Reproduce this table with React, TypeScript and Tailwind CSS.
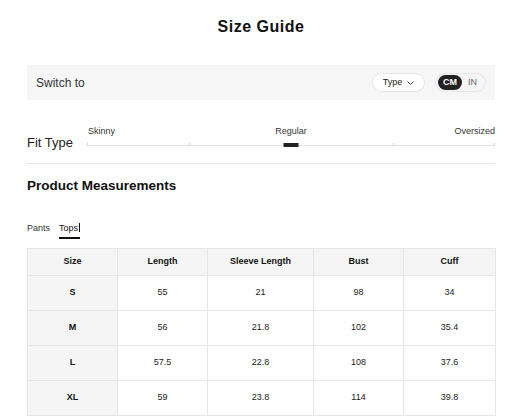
const rows = [
  { size: 'S', length: '55', sleeve: '21', bust: '98', cuff: '34' },
  { size: 'M', length: '56', sleeve: '21.8', bust: '102', cuff: '35.4' },
  { size: 'L', length: '57.5', sleeve: '22.8', bust: '108', cuff: '37.6' },
  { size: 'XL', length: '59', sleeve: '23.8', bust: '114', cuff: '39.8' },
];

export default function App() {
  return (
    <div className="w-[515px] h-[419px] overflow-hidden bg-white text-[#222] font-['Liberation_Sans',Arial,sans-serif]">
      <div className="ml-[27px] w-[468px]">
        {/* Title */}
        <h1 className="pt-[18px] text-center text-[16px] leading-[18px] font-bold tracking-[0.5px] text-[#111]">
          Size Guide
        </h1>

        {/* Switch bar */}
        <div className="mt-[29px] h-[35px] bg-[#f6f6f6] flex items-center justify-between pl-[9px] pr-[9px]">
          <span className="text-[12px] text-[#333]">Switch to</span>
          <div className="flex items-center gap-[10px]">
            <div className="w-[53px] h-[19px] rounded-full bg-white border border-[#e6e6e6] flex items-center justify-center gap-[5px]">
              <span className="text-[9px] leading-none text-[#222]">Type</span>
              <svg width="7" height="4" viewBox="0 0 7 4" fill="none">
                <polyline points="0.5,0.5 3.5,3.5 6.5,0.5" stroke="#444" strokeWidth="1" />
              </svg>
            </div>
            <div className="w-[51px] h-[19px] rounded-full border border-[#e6e6e6] flex items-center pl-[2px]">
              <span className="w-[24px] h-[15px] rounded-full bg-[#222] text-white text-[9px] font-bold flex items-center justify-center">
                CM
              </span>
              <span className="ml-[6px] text-[9px] text-[#666]">IN</span>
            </div>
          </div>
        </div>

        {/* Fit type */}
        <div className="mt-[26px] flex items-start h-[21px]">
          <div className="w-[60px] mt-[9px] text-[13px] leading-[15px] font-medium text-[#222]">Fit Type</div>
          <div className="flex-1">
            <div className="relative h-[10px] text-[9px] leading-[10px] text-[#333]">
              <span className="absolute left-[1px] top-0">Skinny</span>
              <span className="absolute left-1/2 -translate-x-1/2 top-0">Regular</span>
              <span className="absolute right-0 top-0">Oversized</span>
            </div>
            <div className="relative mt-[7px] h-[4px]">
              <div className="absolute left-0 right-0 top-[2px] h-px bg-[#e2e2e2]" />
              <div className="absolute left-0 top-0 w-px h-[3px] bg-[#d8d8d8]" />
              <div className="absolute left-1/4 top-0 w-px h-[3px] bg-[#d8d8d8]" />
              <div className="absolute left-3/4 top-0 w-px h-[3px] bg-[#d8d8d8]" />
              <div className="absolute right-0 top-0 w-px h-[3px] bg-[#d8d8d8]" />
              <div className="absolute left-1/2 -translate-x-1/2 top-0 w-[15px] h-[4px] bg-[#222]" />
            </div>
          </div>
        </div>

        <div className="mt-[16px] border-t border-[#e6e6e6]" />

        {/* Product measurements */}
        <h2 className="mt-[14px] text-[13.5px] leading-[16px] font-bold text-[#111]">Product Measurements</h2>

        <div className="mt-[29px] flex items-start gap-[9px] text-[9px] leading-[10px]">
          <span className="text-[#333]">Pants</span>
          <span className="pb-[4px] border-b-2 border-[#111] text-[#111] flex items-start">
            Tops
            <span className="inline-block w-px h-[9px] bg-[#111] ml-px" />
          </span>
        </div>

        <table className="mt-[9px] w-[468px] table-fixed border-collapse text-[9px] text-center">
          <colgroup>
            <col className="w-[90px]" />
            <col className="w-[90px]" />
            <col className="w-[106px]" />
            <col className="w-[90px]" />
            <col className="w-[92px]" />
          </colgroup>
          <thead>
            <tr className="bg-[#f5f5f5]">
              {['Size', 'Length', 'Sleeve Length', 'Bust', 'Cuff'].map((h) => (
                <th key={h} className="h-[27px] border border-[#e6e6e6] font-bold text-[#111]">
                  {h}
                </th>
              ))}
            </tr>
          </thead>
          <tbody>
            {rows.map((r) => (
              <tr key={r.size}>
                <td className="h-[35px] border border-[#e6e6e6] bg-[#f5f5f5] font-bold text-[#111]">{r.size}</td>
                <td className="border border-[#e6e6e6]">{r.length}</td>
                <td className="border border-[#e6e6e6]">{r.sleeve}</td>
                <td className="border border-[#e6e6e6]">{r.bust}</td>
                <td className="border border-[#e6e6e6]">{r.cuff}</td>
              </tr>
            ))}
          </tbody>
        </table>
      </div>
    </div>
  );
}
